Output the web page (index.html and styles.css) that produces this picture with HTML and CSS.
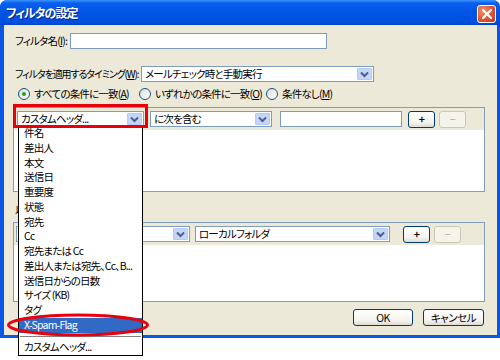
FILE: index.html
```html
<!DOCTYPE html>
<html lang="ja">
<head>
    <meta charset="UTF-8">
    <title>フィルタの設定</title>
    <link rel="stylesheet" href="styles.css">
</head>
<body>
    <div class="window">
        <div class="titlebar">
            <span class="title">フィルタの設定</span>
            <span class="close">
                <svg width="10" height="10" viewBox="0 0 10 10"><path d="M1 1L9 9M9 1L1 9" stroke="#fff" stroke-width="2.2" stroke-linecap="square"/></svg>
            </span>
        </div>
        <div class="client">
            <div class="row name-row">
                <label class="name-label">フィルタ名(<u>I</u>):</label>
                <div class="textbox name-box"></div>
            </div>

            <div class="row timing-row">
                <label class="timing-label">フィルタを適用するタイミング(<u>W</u>):</label>
                <div class="combo timing-combo">
                    <span class="combo-text">メールチェック時と手動実行</span>
                    <span class="arrow"></span>
                </div>
            </div>

            <div class="row radios">
                <span class="radio checked"></span><span class="radio-text r1">すべての条件に一致(<u>A</u>)</span>
                <span class="radio"></span><span class="radio-text r2">いずれかの条件に一致(<u>O</u>)</span>
                <span class="radio"></span><span class="radio-text">条件なし(<u>M</u>)</span>
            </div>

            <div class="frame rules">
                <div class="frame-row">
                    <div class="combo field-combo">
                        <span class="combo-text">カスタムヘッダ...</span>
                        <span class="arrow"></span>
                    </div>
                    <div class="combo match-combo">
                        <span class="combo-text">に次を含む</span>
                        <span class="arrow"></span>
                    </div>
                    <div class="textbox value-box"></div>
                    <button class="btn small">+</button>
                    <button class="btn small disabled">−</button>
                </div>
                <div class="frame-body"></div>
            </div>

            <div class="action-label">以下の操作を実行(<u>P</u>):</div>

            <div class="frame actions">
                <div class="frame-row">
                    <!-- 左のコンボはドロップダウンに隠れている -->
                    <div class="combo action-combo">
                        <span class="combo-text"></span>
                        <span class="arrow"></span>
                    </div>
                    <div class="combo folder-combo">
                        <span class="combo-text">ローカルフォルダ</span>
                        <span class="arrow"></span>
                    </div>
                    <button class="btn small plus2">+</button>
                    <button class="btn small disabled">−</button>
                </div>
                <div class="frame-body"></div>
            </div>

            <div class="row footer">
                <button class="btn ok">OK</button>
                <button class="btn">キャンセル</button>
            </div>
        </div>
    </div>

    <ul class="dropdown">
        <li>件名</li>
        <li>差出人</li>
        <li>本文</li>
        <li>送信日</li>
        <li>重要度</li>
        <li>状態</li>
        <li>宛先</li>
        <li>Cc</li>
        <li>宛先または Cc</li>
        <li>差出人または宛先、Cc、B...</li>
        <li>送信日からの日数</li>
        <li>サイズ (KB)</li>
        <li>タグ</li>
        <li class="selected">X-Spam-Flag</li>
        <li class="separator"></li>
        <li>カスタムヘッダ...</li>
    </ul>

    <!-- 注釈 -->
    <div class="mark-rect"></div>
    <svg class="mark-ellipse" width="150" height="30" viewBox="0 0 150 30">
        <ellipse cx="75" cy="15" rx="69.5" ry="10" fill="none" stroke="#e8000b" stroke-width="3"/>
    </svg>
</body>
</html>
```

FILE: styles.css
```css
* {
    margin: 0;
    padding: 0;
    box-sizing: border-box;
}

body {
    width: 500px;
    height: 360px;
    background: #fff;
    font-family: "Noto Sans CJK JP", sans-serif;
    font-size: 10.5px;
    letter-spacing: -0.8px;
    font-feature-settings: "palt";
    color: #000;
    position: relative;
    overflow: hidden;
    white-space: nowrap;
}

u {
    text-decoration: underline;
    text-underline-offset: 1px;
}

.window {
    width: 500px;
    height: 338px;
    background: #0a55e6;
    border-radius: 7px 7px 0 0;
    display: flex;
    flex-direction: column;
}

.titlebar {
    height: 25px;
    display: flex;
    align-items: center;
    justify-content: space-between;
    padding: 0 4px 0 6px;
    border-radius: 7px 7px 0 0;
    background: linear-gradient(#3d95ff 0%, #0a5fef 12%, #0055e5 50%, #0050e0 88%, #0045c8 100%);
}

.title {
    color: #fff;
    font-weight: bold;
    font-size: 12px;
    letter-spacing: -1px;
    text-shadow: 1px 1px 0 #0a1e7a;
}

.close {
    width: 19px;
    height: 18px;
    margin-top: 2px;
    border: 1px solid #fff;
    border-radius: 3px;
    background: radial-gradient(circle at 30% 30%, #f0916e, #de4f2c 60%, #c4381a);
    display: flex;
    align-items: center;
    justify-content: center;
}

.client {
    flex: 1;
    margin: 0 3px 3px 4px;
    background: #ece9d8;
    padding: 8px 12px 0 9px;
    display: flex;
    flex-direction: column;
}

.row {
    display: flex;
    align-items: center;
}

label,
.radio-text {
    flex: none;
    line-height: 14px;
}

.name-row {
    height: 16px;
}

.name-label {
    width: 55px;
    margin-left: 2px;
}

.textbox {
    height: 16px;
    flex: none;
    background: #fff;
    border: 1px solid #7f9db9;
}

.name-box {
    width: 257px;
}

.timing-row {
    margin-top: 17px;
    height: 16px;
}

.timing-label {
    width: 126px;
    margin-left: 2px;
    font-size: 10px;
    letter-spacing: -1.1px;
}

.combo {
    height: 16px;
    flex: none;
    background: #fff;
    border: 1px solid #7f9db9;
    display: flex;
    align-items: center;
    justify-content: space-between;
    padding: 0 1px 0 3px;
    overflow: hidden;
}

.combo-text {
    line-height: 14px;
}

.arrow {
    width: 15px;
    height: 12px;
    flex: none;
    border-radius: 1px;
    background: #c4d5fa url("data:image/svg+xml,%3Csvg xmlns='http://www.w3.org/2000/svg' width='15' height='12'%3E%3Cpath d='M4 4.5L7.5 8L11 4.5' fill='none' stroke='%234d6185' stroke-width='2'/%3E%3C/svg%3E") no-repeat center;
    border: 1px solid #b7caf5;
}

.timing-combo {
    width: 233px;
}

.radios {
    margin-top: 5px;
    height: 13px;
    padding-left: 5px;
}

.radio {
    width: 12px;
    height: 12px;
    border: 1px solid #1c5180;
    border-radius: 50%;
    background: linear-gradient(135deg, #dcdcd6, #fff);
    display: flex;
    align-items: center;
    justify-content: center;
    flex: none;
}

.radio.checked::after {
    content: "";
    width: 4px;
    height: 4px;
    border-radius: 50%;
    background: #21a121;
}

.radio-text {
    margin-left: 4px;
}

.r1 {
    width: 105px;
}

.r2 {
    width: 111px;
}

.frame {
    border: 1px solid #7f9db9;
    display: flex;
    flex-direction: column;
}

.rules {
    margin-top: 7px;
    height: 85px;
}

.frame-row {
    display: flex;
    align-items: center;
    padding: 2px 3px;
    height: 22px;
    background: #ece9d8;
}

.frame-body {
    flex: 1;
    background: #fff;
}

.field-combo {
    width: 127px;
}

.match-combo {
    width: 122px;
    margin-left: 6px;
}

.value-box {
    width: 122px;
    margin-left: 8px;
}

.btn {
    font-family: inherit;
    font-size: 10.5px;
    letter-spacing: -0.5px;
    font-feature-settings: "palt";
    height: 17px;
    flex: none;
    border: 1px solid #003c74;
    border-radius: 3px;
    background: linear-gradient(#fff, #f4f3ee 70%, #dedbd0);
    color: #000;
    display: flex;
    align-items: center;
    justify-content: center;
    line-height: 14px;
}

.btn.small {
    width: 27px;
    margin-left: 6px;
    font-weight: bold;
}

.btn.small + .btn.small {
    margin-left: 4px;
}

.btn.disabled {
    border-color: #c9c7ba;
    background: #f5f4ea;
    color: #aca899;
    font-weight: normal;
}

.action-label {
    margin-top: 11px;
    margin-left: 2px;
    height: 14px;
    line-height: 14px;
}

.actions {
    margin-top: 5px;
    height: 80px;
}

.action-combo {
    width: 174px;
    margin-left: -1px;
}

.folder-combo {
    width: 195px;
    margin-left: 5px;
}

.btn.small.plus2 {
    margin-left: 13px;
}

.footer {
    margin-top: 7px;
    justify-content: flex-end;
    padding-right: 1px;
}

.footer .btn {
    width: 61px;
}

.footer .ok {
    width: 60px;
    margin-right: 10px;
}

.dropdown {
    position: absolute;
    left: 18px;
    top: 125px;
    width: 125px;
    border: 1px solid #000;
    background: #fff;
    list-style: none;
    padding-bottom: 1px;
}

.dropdown li {
    height: 14.75px;
    line-height: 14.75px;
    padding-left: 5px;
}

.dropdown li.selected {
    background: #316ac5;
    color: #fff;
}

.dropdown li.separator {
    height: 1px;
    margin: 3px 1px;
    background: #808080;
}

.mark-rect {
    position: absolute;
    left: 13px;
    top: 104px;
    width: 135px;
    height: 24px;
    border: 3px solid #e8000b;
}

.mark-ellipse {
    position: absolute;
    left: 3px;
    top: 310px;
}
```
